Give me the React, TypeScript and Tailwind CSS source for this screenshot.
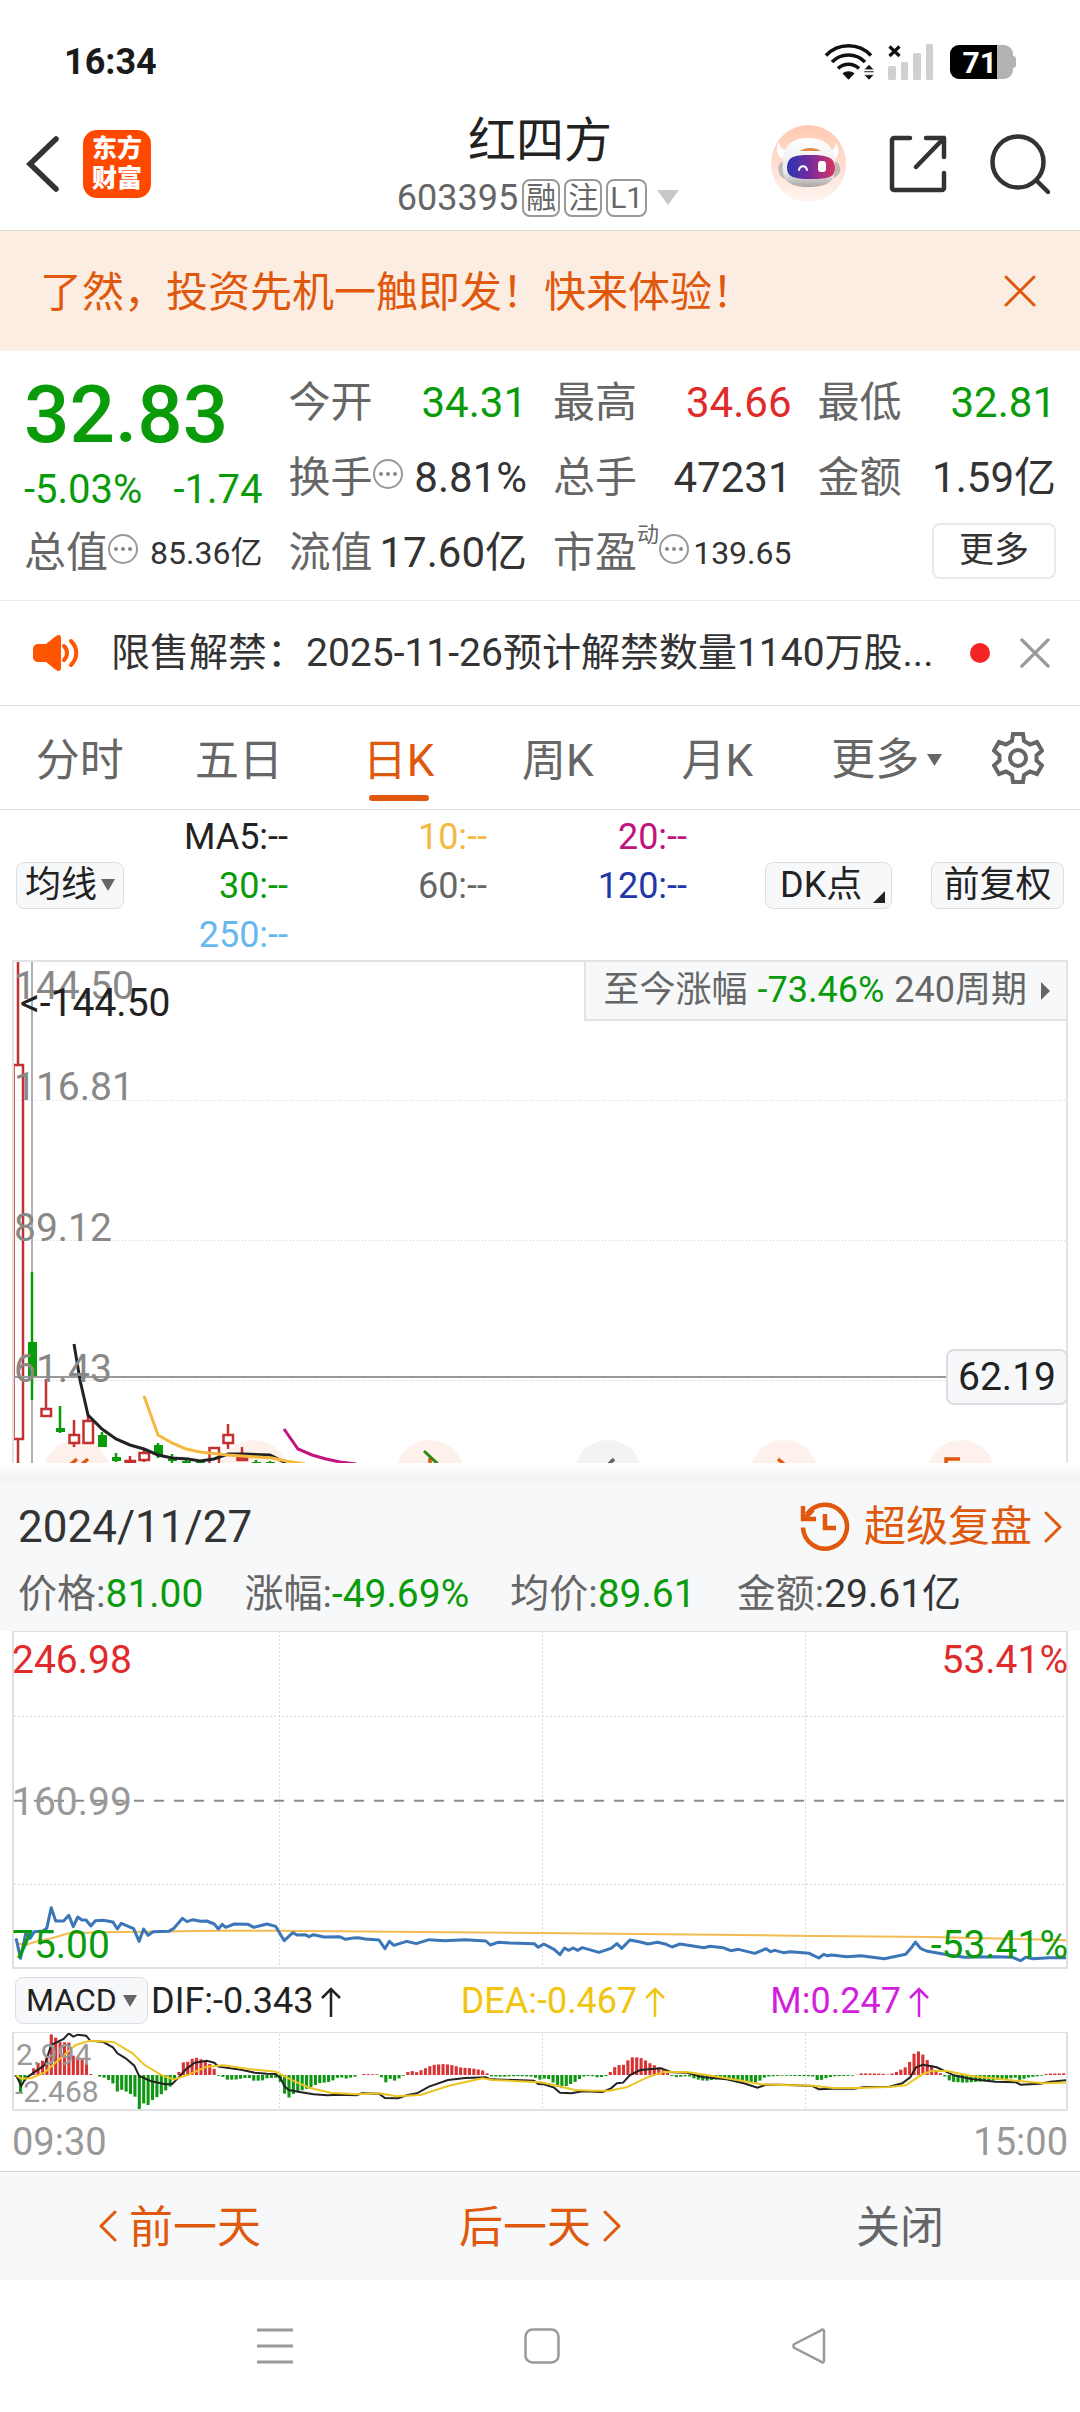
import type { ReactNode } from "react";

type Point = [number, number];

const toPoints = (list: Point[]) => list.map((p) => p.join(",")).join(" ");

/* ---------- chart data (x along the session, y in plot units) ---------- */

const PRICE: Point[] = [
  [47, 295], [60, 355], [75, 280], [88, 295], [100, 275], [125, 273], [136, 265], [149, 203], [162, 243], [185, 243],
  [200, 226], [213, 260], [226, 231], [238, 240], [250, 240], [264, 258], [277, 242], [300, 241], [328, 246], [341, 267],
  [352, 250], [388, 266], [404, 304], [417, 267], [430, 286], [445, 275], [490, 274], [505, 265], [530, 235], [543, 245],
  [560, 239], [582, 244], [600, 243], [622, 252], [634, 267], [645, 253], [655, 262], [680, 252], [720, 253], [737, 262],
  [775, 252], [800, 259], [825, 302], [850, 278], [862, 285], [885, 284], [897, 290], [910, 284], [940, 291], [985, 290],
  [1003, 298], [1025, 294], [1040, 293], [1060, 297], [1100, 300], [1117, 326], [1130, 304], [1143, 316], [1180, 304],
  [1208, 311], [1245, 299], [1290, 302], [1350, 299], [1410, 303], [1423, 315], [1445, 307], [1480, 309], [1550, 311],
  [1562, 322], [1578, 312], [1608, 328], [1625, 344], [1638, 324], [1650, 331], [1663, 324], [1676, 331], [1690, 323],
  [1738, 337], [1773, 325], [1790, 311], [1804, 325], [1828, 300], [1858, 306], [1880, 312], [1908, 307], [1933, 313],
  [1950, 321], [1973, 312], [2043, 323], [2060, 319], [2098, 323], [2120, 332], [2143, 328], [2190, 340], [2223, 326],
  [2236, 335], [2248, 331], [2273, 338], [2293, 335], [2348, 340], [2376, 354], [2390, 343], [2400, 347], [2413, 345],
  [2458, 350], [2498, 347], [2566, 356], [2628, 343], [2643, 325], [2656, 306], [2671, 325], [2688, 333], [2748, 344],
  [2798, 352], [2888, 350], [2938, 352], [2961, 362], [2976, 352], [2998, 356], [3043, 353], [3101, 353],
];

const AVERAGE: Point[] = [
  [47, 310], [75, 315], [110, 303], [150, 295], [200, 280], [300, 277], [520, 274], [640, 272], [800, 272], [1568, 279],
  [2300, 287], [2700, 291], [3101, 301],
];

const DIF: Point[] = [
  [47, 706], [62, 738], [75, 715], [95, 700], [130, 675], [149, 615], [185, 597], [200, 580], [213, 590], [226, 584],
  [250, 587], [262, 602], [300, 606], [328, 622], [341, 640], [365, 655], [390, 677], [404, 708], [440, 724], [480, 733],
  [500, 732], [518, 713], [540, 688], [565, 668], [600, 662], [622, 668], [634, 680], [700, 689], [740, 698], [775, 701],
  [800, 702], [815, 715], [825, 738], [838, 750], [870, 756], [910, 763], [950, 766], [985, 764], [1035, 766], [1050, 760],
  [1100, 761], [1117, 774], [1155, 775], [1180, 766], [1210, 760], [1245, 740], [1300, 720], [1350, 714], [1410, 712],
  [1423, 718], [1550, 722], [1562, 732], [1578, 733], [1608, 743], [1625, 758], [1658, 760], [1690, 754], [1748, 756],
  [1773, 745], [1790, 730], [1808, 728], [1828, 705], [1858, 690], [1918, 685], [1950, 697], [1993, 698], [2038, 711],
  [2108, 718], [2158, 730], [2198, 743], [2223, 734], [2268, 734], [2358, 738], [2376, 748], [2418, 746], [2478, 746],
  [2508, 741], [2578, 741], [2618, 730], [2641, 712], [2658, 682], [2678, 674], [2718, 682], [2768, 706], [2818, 717],
  [2888, 725], [2948, 727], [2961, 734], [3018, 731], [3048, 725], [3101, 720],
];

const DEA: Point[] = [
  [47, 706], [62, 716], [90, 715], [130, 697], [170, 660], [220, 615], [262, 602], [330, 606], [385, 640], [420, 675],
  [470, 706], [505, 718], [550, 703], [600, 680], [650, 676], [720, 687], [800, 695], [850, 722], [900, 744], [960, 758],
  [1035, 763], [1100, 760], [1150, 769], [1220, 765], [1300, 738], [1400, 715], [1430, 720], [1568, 727], [1608, 735],
  [1668, 750], [1718, 752], [1768, 752], [1818, 742], [1878, 712], [1928, 695], [1998, 697], [2068, 708], [2138, 720],
  [2208, 733], [2268, 735], [2358, 737], [2418, 744], [2488, 744], [2578, 741], [2628, 736], [2678, 702], [2708, 692],
  [2748, 693], [2818, 708], [2948, 722], [3028, 730], [3101, 727],
];

const HISTOGRAM: Point[] = [
  [47, -5], [60, -52], [72, -18], [85, -3], [98, 20], [111, 36], [124, 43], [137, 60], [149, 122], [162, 112], [175, 98],
  [200, 98], [213, 58], [226, 55], [239, 50], [252, 33], [264, 3], [277, 0], [290, -5], [303, -8], [316, -15], [330, -27],
  [341, -50], [354, -44], [367, -50], [392, -65], [404, -105], [417, -85], [430, -90], [443, -75], [468, -58], [494, -35],
  [505, -15], [518, 5], [530, 38], [543, 38], [556, 48], [569, 52], [582, 48], [594, 40], [607, 35], [620, 22], [632, -2],
  [645, -4], [658, -14], [683, -14], [710, -9], [725, -9], [735, -17], [760, -17], [775, -10], [800, -8], [813, -20],
  [825, -55], [838, -68], [851, -57], [876, -46], [900, -38], [925, -25], [960, -20], [985, -5], [1003, -11], [1030, -5],
  [1042, 0], [1055, 3], [1095, 2], [1105, -3], [1117, -25], [1130, -10], [1143, -18], [1168, -5], [1180, 8], [1195, 12],
  [1208, 8], [1230, 18], [1255, 30], [1290, 33], [1310, 30], [1340, 22], [1370, 20], [1400, 14], [1410, 8], [1423, -4],
  [1460, -5], [1500, -3], [1550, -5], [1562, -15], [1573, -12], [1588, -9], [1608, -25], [1625, -42], [1650, -30],
  [1676, -17], [1690, -5], [1713, -2], [1738, -8], [1758, -3], [1765, 4], [1778, 15], [1790, 33], [1804, 26], [1818, 38],
  [1828, 53], [1853, 53], [1868, 48], [1880, 38], [1893, 32], [1908, 25], [1928, 12], [1943, 2], [1956, -7], [1998, -3],
  [2018, -12], [2046, -18], [2098, -10], [2128, -18], [2198, -23], [2213, -10], [2223, -5], [2268, -2], [2358, -4],
  [2376, -19], [2390, -11], [2418, -4], [2478, -2], [2498, 5], [2558, 4], [2578, 1], [2603, 10], [2630, 25], [2643, 45],
  [2656, 72], [2669, 70], [2681, 58], [2694, 40], [2707, 25], [2720, 10], [2733, 3], [2746, -8], [2758, -20], [2798, -23],
  [2868, -18], [2948, -8], [2961, -16], [2978, -8], [3023, -2], [3038, 4], [3088, 5], [3101, 9],
];

function valueAt(list: Point[], x: number) {
  for (let i = 1; i < list.length; i++) {
    const [x0, y0] = list[i - 1];
    const [x1, y1] = list[i];
    if (x <= x1) return y0 + ((y1 - y0) * (x - x0)) / (x1 - x0);
  }
  return list[list.length - 1][1];
}

const BARS = Array.from({ length: 240 }, (_, i) => {
  const x = 47 + i * 12.77;
  return { x, v: valueAt(HISTOGRAM, x) };
});

type Candle = { x: number; up: boolean; top: number; bottom: number; high: number; low: number };

const CANDLES: Candle[] = [
  { x: 18, up: true, top: 1065, bottom: 1439, high: 960, low: 1466 },
  { x: 32, up: false, top: 1342, bottom: 1377, high: 1272, low: 1400 },
  { x: 46, up: true, top: 1409, bottom: 1416, high: 1379, low: 1416 },
  { x: 60, up: false, top: 1428, bottom: 1432, high: 1406, low: 1433 },
  { x: 74, up: true, top: 1435, bottom: 1443, high: 1420, low: 1447 },
  { x: 88, up: true, top: 1421, bottom: 1443, high: 1415, low: 1443 },
  { x: 102, up: false, top: 1435, bottom: 1447, high: 1432, low: 1447 },
  { x: 116, up: false, top: 1457, bottom: 1461, high: 1453, low: 1462 },
  { x: 130, up: true, top: 1461, bottom: 1462, high: 1456, low: 1462 },
  { x: 144, up: true, top: 1453, bottom: 1460, high: 1449, low: 1462 },
  { x: 158, up: false, top: 1445, bottom: 1455, high: 1443, low: 1458 },
  { x: 172, up: false, top: 1459, bottom: 1461, high: 1454, low: 1463 },
  { x: 186, up: false, top: 1461, bottom: 1463, high: 1459, low: 1463 },
  { x: 200, up: false, top: 1462, bottom: 1463, high: 1460, low: 1463 },
  { x: 214, up: true, top: 1448, bottom: 1466, high: 1448, low: 1466 },
  { x: 228, up: true, top: 1435, bottom: 1443, high: 1424, low: 1449 },
  { x: 242, up: true, top: 1458, bottom: 1460, high: 1447, low: 1460 },
  { x: 256, up: false, top: 1462, bottom: 1463, high: 1460, low: 1463 },
  { x: 270, up: false, top: 1462, bottom: 1463, high: 1461, low: 1463 },
];

const MA5: Point[] = [
  [74, 1344], [80, 1380], [88, 1415], [102, 1429], [116, 1439], [130, 1445], [144, 1449], [158, 1455], [172, 1458],
  [188, 1459], [200, 1461], [214, 1459], [228, 1454], [244, 1454], [270, 1455], [286, 1463],
];
const MA10: Point[] = [
  [144, 1396], [158, 1435], [172, 1443], [186, 1449], [200, 1452], [228, 1455], [272, 1458], [286, 1461], [305, 1464],
];
const MA20: Point[] = [[284, 1429], [298, 1449], [312, 1455], [326, 1459], [340, 1462], [356, 1464]];

/* ------------------------------- icons ------------------------------- */

function MoreInfo() {
  return (
    <svg viewBox="0 0 30 30" className="mb-2 h-[30px] w-[30px] shrink-0" aria-hidden="true">
      <circle cx="15" cy="15" r="14" fill="none" stroke="#999" strokeWidth="2" />
      <circle cx="8" cy="15" r="2" fill="#888" />
      <circle cx="15" cy="15" r="2" fill="#888" />
      <circle cx="22" cy="15" r="2" fill="#888" />
    </svg>
  );
}

function Triangle({ className }: { className: string }) {
  return (
    <svg viewBox="0 0 14 12" preserveAspectRatio="none" className={className} aria-hidden="true">
      <path d="M0 0h14L7 12z" fill="currentColor" />
    </svg>
  );
}

function Cross({ className, width }: { className: string; width: number }) {
  return (
    <svg viewBox="0 0 32 32" className={className} fill="none" stroke="currentColor" strokeWidth={width} strokeLinecap="round" aria-hidden="true">
      <path d="M2 2l28 28M30 2L2 30" />
    </svg>
  );
}

function Chevron({ left = false }: { left?: boolean }) {
  return (
    <svg viewBox="0 0 18 32" className="h-8 w-[18px]" fill="none" stroke="currentColor" strokeWidth="3" strokeLinecap="round" strokeLinejoin="round" aria-hidden="true">
      <path d={left ? "M16 2L2 16l14 14" : "M2 2l14 14L2 30"} />
    </svg>
  );
}

function ArrowUp() {
  return (
    <svg viewBox="0 0 20 30" className="ml-2 h-[30px] w-5" fill="none" stroke="currentColor" strokeWidth="2.5" aria-hidden="true">
      <path d="M10 30V2M1 11l9-9 9 9" />
    </svg>
  );
}

function Robot() {
  return (
    <svg viewBox="0 0 75 77" className="h-[77px] w-[75px]" aria-hidden="true">
      <defs>
        <linearGradient id="halo" x1="0" y1="0" x2="0" y2="1">
          <stop offset="0" stopColor="#ffc9b0" />
          <stop offset="0.6" stopColor="#ffe2d5" />
          <stop offset="1" stopColor="#fff6f1" />
        </linearGradient>
        <linearGradient id="visor" x1="0" y1="0" x2="1" y2="0">
          <stop offset="0" stopColor="#2b35b4" />
          <stop offset="0.5" stopColor="#7a2a9a" />
          <stop offset="1" stopColor="#d8365c" />
        </linearGradient>
        <linearGradient id="shell" x1="0" y1="0" x2="0" y2="1">
          <stop offset="0" stopColor="#ffffff" />
          <stop offset="0.7" stopColor="#ebe9e9" />
          <stop offset="1" stopColor="#aaa6a6" />
        </linearGradient>
      </defs>
      <ellipse cx="37.5" cy="38.5" rx="37.5" ry="38.5" fill="url(#halo)" />
      <path d="M8 17c1 6 4 8 9 9l-6 8c-5-4-7-11-3-17zM65 18c0 5-3 7-7 8l6 8c4-4 5-10 1-16z" fill="#fff" />
      <path d="M9 38c-3 5-2 13 5 16V36zM67 38c4 5 3 11-4 15V36z" fill="#bdb9b9" />
      <path d="M12 36c0-16 10-23 25-23s26 7 27 23c1 17-2 26-27 26-22 0-27-9-25-26z" fill="url(#shell)" />
      <path d="M29 26c5-4 15-4 21 0z" fill="#e08a4c" />
      <path d="M16 42c1-10 6-12 23-12s24 2 25 12c0 10-5 12-24 12-18 0-24-2-24-12z" fill="url(#visor)" />
      <path d="M28 45c1-5 7-5 8 0" fill="none" stroke="#fff" strokeWidth="2" strokeLinecap="round" />
      <rect x="47" y="36" width="8" height="11" rx="3" fill="#fff" />
    </svg>
  );
}

function StatusIcons() {
  return (
    <div className="flex items-center">
      <svg viewBox="0 0 50 36" className="mr-3.5 h-9 w-[50px]" fill="none" stroke="#111" aria-label="Wi-Fi">
        <path d="M2 11.500a31 31 0 0 1 45 0M8 18a23 23 0 0 1 33 0M14 24.500a15 15 0 0 1 21 0" strokeWidth="3.600" />
        <path d="M18.500 29.500c3-3 9-3 12 0l-6 6.200z" fill="#111" stroke="none" />
        <path d="M45 20.500l5 5.200H40zM45 36l5-5.200H40zM40 27h10v1.500H40z" fill="#111" stroke="#fff" strokeWidth="0.600" />
      </svg>
      <svg viewBox="0 0 46 36" className="mr-4 h-9 w-[46px]" aria-label="No signal">
        <path d="M1.500 2.500l10 9.500M11.500 2.500L1.500 12" stroke="#111" strokeWidth="3.200" />
        <g fill="#d0d0d0">
          <rect x="0" y="22" width="8" height="14" rx="1.500" />
          <rect x="13" y="18" width="7" height="18" rx="1.500" />
          <rect x="25" y="9" width="8" height="27" rx="1.500" />
          <rect x="38" y="0" width="7" height="36" rx="1.500" />
        </g>
      </svg>
      <div className="flex items-center">
        <div className="flex h-[34px] w-[63px] overflow-hidden rounded-[9px] bg-[#b3b3b3]">
          <span className="w-[47px] bg-black text-right text-[30px] leading-[35px] font-bold text-white">71</span>
        </div>
        <span className="h-3 w-[3px] rounded-r bg-[#b3b3b3]" />
      </div>
    </div>
  );
}

/* ------------------------------ sections ------------------------------ */

function Tag({ children }: { children: ReactNode }) {
  return (
    <span className="flex h-[38px] items-center rounded-lg border-2 border-[#999] px-0.5 text-[30px] leading-8">
      {children}
    </span>
  );
}

function Header() {
  return (
    <header className="grid h-[134px] grid-cols-[1fr_auto_1fr] items-center border-b border-[#d8d8d4]">
      <div className="flex items-center gap-6 pl-[26px]">
        <button type="button" aria-label="返回">
          <svg viewBox="0 0 33 56" className="h-14 w-[33px]" fill="none" stroke="#333" strokeWidth="5.500" strokeLinecap="round" aria-hidden="true">
            <path d="M30 3L4 28l26 25" />
          </svg>
        </button>
        <div className="grid h-[68px] w-[68px] place-content-center rounded-[14px] bg-[#ff4800] text-center text-[25px] leading-[30px] font-black text-white">
          <span>东方</span>
          <span>财富</span>
        </div>
      </div>
      <div className="flex flex-col items-center gap-2.5 pt-0.5">
        <h1 className="text-[48px] leading-[56px] text-[#222]">红四方</h1>
        <button type="button" className="flex items-center gap-1 pr-1 text-[#666]">
          <span className="text-[36px] leading-[38px]">603395</span>
          <Tag>融</Tag>
          <Tag>注</Tag>
          <Tag>L1</Tag>
          <Triangle className="ml-1.5 h-[15px] w-[22px] text-[#c8c8c8]" />
        </button>
      </div>
      <div className="flex items-center justify-end gap-[43px] pr-[30px]">
        <button type="button" aria-label="智能助手">
          <Robot />
        </button>
        <button type="button" aria-label="分享">
          <svg viewBox="0 0 58 58" className="h-[58px] w-[58px]" fill="none" stroke="#333" strokeWidth="4.500" strokeLinecap="round" strokeLinejoin="round" aria-hidden="true">
            <path d="M21 3H5a2 2 0 0 0-2 2v48a2 2 0 0 0 2 2h48a2 2 0 0 0 2-2V38M37 3h18v19M55 3L27 32" />
          </svg>
        </button>
        <button type="button" aria-label="搜索">
          <svg viewBox="0 0 60 60" className="h-[60px] w-[60px]" fill="none" stroke="#333" strokeWidth="4.500" strokeLinecap="round" aria-hidden="true">
            <circle cx="28" cy="28" r="25.500" />
            <path d="M47 47l11 11" />
          </svg>
        </button>
      </div>
    </header>
  );
}

function Stat({ label, value, tone = "text-[#333]", info = false, small = false, sup }: {
  label: string;
  value: string;
  tone?: string;
  info?: boolean;
  small?: boolean;
  sup?: string;
}) {
  return (
    <div className="flex h-[75px] items-center justify-between whitespace-nowrap">
      <span className="flex items-center text-[42px] leading-[50px] text-[#666]">
        {label}
        {sup && <sup className="top-0 mb-9 text-[22px] leading-6">{sup}</sup>}
        {info && <MoreInfo />}
      </span>
      <span className={small ? `text-[32px] leading-[50px] ${tone}` : `text-[42px] leading-[50px] ${tone}`}>{value}</span>
    </div>
  );
}

function Quote() {
  return (
    <section className="grid grid-cols-4 gap-x-[26px] border-b border-[#ebebeb] px-6 pt-3.5 pb-2.5">
      <div className="row-span-2 pt-1.5 text-[#0a9b0a]">
        <p className="text-[80px] leading-[88px] font-medium">32.83</p>
        <p className="mt-1.5 flex justify-between text-[40px] leading-[50px]">
          <span>-5.03%</span>
          <span>-1.74</span>
        </p>
      </div>
      <Stat label="今开" value="34.31" tone="text-[#0a9b0a]" />
      <Stat label="最高" value="34.66" tone="text-[#e02b2b]" />
      <Stat label="最低" value="32.81" tone="text-[#0a9b0a]" />
      <Stat label="换手" value="8.81%" info />
      <Stat label="总手" value="47231" />
      <Stat label="金额" value="1.59亿" />
      <Stat label="总值" value="85.36亿" info small />
      <Stat label="流值" value="17.60亿" />
      <Stat label="市盈" value="139.65" sup="动" info small />
      <div className="flex h-[71px] items-center justify-end">
        <button type="button" className="h-14 w-[124px] rounded-lg border-2 border-[#e8eaec] text-[35px] leading-[50px] text-[#333]">
          更多
        </button>
      </div>
    </section>
  );
}

function Notice() {
  return (
    <section className="flex h-[105px] items-center border-b border-[#d9d9d9] pr-[30px] pl-[33px]">
      <svg viewBox="0 0 46 38" className="mr-8 h-[38px] w-[46px] shrink-0" aria-hidden="true">
        <path d="M6 10h7L23 2c3-2 5-1 5 2v30c0 3-2 4-5 2l-10-8H6c-4 0-6-2-6-5v-8c0-3 2-5 6-5z" fill="#ff5500" />
        <path d="M31 12c4 4 4 10 0 14M38 7c7 7 7 17 0 24" fill="none" stroke="#ff5500" strokeWidth="4" strokeLinecap="round" />
      </svg>
      <p className="flex-1 text-[39px] leading-[50px] whitespace-nowrap text-[#333]">限售解禁：2025-11-26预计解禁数量1140万股...</p>
      <span className="mr-[30px] h-5 w-5 rounded-full bg-[#f52424]" />
      <button type="button" aria-label="关闭公告" className="text-[#999]">
        <Cross className="h-[30px] w-[30px]" width={3.5} />
      </button>
    </section>
  );
}

function Tabs() {
  return (
    <nav className="grid h-[104px] grid-cols-[160fr_160fr_160fr_160fr_160fr_180fr_104fr] border-b border-[#d9d9d9] text-[44px] leading-[50px] text-[#666]">
      {["分时", "五日", "日K", "周K", "月K"].map((name) =>
        name === "日K" ? (
          <button key={name} type="button" aria-current="page" className="flex flex-col items-center pt-[30px] text-[#e0580c]">
            {name}
            <span className="mt-[9px] h-1.5 w-[60px] rounded-full bg-[#e0580c]" />
          </button>
        ) : (
          <button key={name} type="button" className="flex justify-center pt-[30px]">
            {name}
          </button>
        ),
      )}
      <button type="button" className="flex items-center justify-center gap-2 pt-1">
        更多
        <Triangle className="h-3 w-[15px]" />
      </button>
      <button type="button" aria-label="设置" className="flex items-center justify-center pr-5">
        <svg viewBox="0 0 52 52" className="h-[52px] w-[52px]" fill="none" stroke="#666" strokeWidth="4" aria-hidden="true">
          <path d="M21 2h10l1 7 6 3.500 7-2.500 5 8.500-5.500 5v5l5.500 5-5 8.500-7-2.500-6 3.500-1 7H21l-1-7-6-3.500-7 2.500-5-8.500 5.500-5v-5L2 18.500 7 10l7 2.500L20 9z" strokeLinejoin="miter" />
          <circle cx="26" cy="26" r="8" />
        </svg>
      </button>
    </nav>
  );
}

const chip = "flex h-[47px] items-center rounded-lg border border-[#dcdfe3] bg-[#f7f8fa] text-[36px] leading-[45px] text-[#222]";

function Averages() {
  return (
    <section className="flex h-[150px] items-center">
      <button type="button" className={`${chip} ml-4 w-[108px] justify-center gap-1`}>
        均线
        <Triangle className="h-3 w-3.5 shrink-0 text-[#666]" />
      </button>
      <div className="mr-auto grid grid-cols-[164px_199px_200px] pt-0.5 text-right text-[36px] leading-[49px]">
        <span className="text-[#222]">MA5:--</span>
        <span className="text-[#f5b93f]">10:--</span>
        <span className="text-[#c2147d]">20:--</span>
        <span className="text-[#0a9b0a]">30:--</span>
        <span className="text-[#666]">60:--</span>
        <span className="text-[#2136a8]">120:--</span>
        <span className="text-[#68b8f0]">250:--</span>
      </div>
      <button type="button" className={`${chip} mr-[39px] w-[127px] justify-between pr-1.5 pl-3.5`}>
        DK点
        <svg viewBox="0 0 12 12" className="mt-6 h-3 w-3" aria-hidden="true">
          <path d="M12 0v12H0z" fill="#222" />
        </svg>
      </button>
      <button type="button" className={`${chip} mr-4 w-[133px] justify-center`}>
        前复权
      </button>
    </section>
  );
}

const axis = "absolute left-0 text-[39px] leading-10 text-[#888]";

function DailyChart() {
  return (
    <section className="relative mx-3 h-[503px] border-x-2 border-t-2 border-[#e3e3e3]">
      <svg viewBox="14 962 1052 501" preserveAspectRatio="none" className="h-full w-full" aria-label="日K线图">
        {[77, 254, 430, 608, 784, 961].map((x) => (
          <circle key={x} cx={x} cy="1474" r="34" fill={x === 608 ? "#f3f3f3" : "#fef0ea"} />
        ))}
        <g stroke="#e0580c" strokeWidth="3.500" fill="none">
          <path d="M70 1465l7-6M81 1465l7-6M778 1459l7 6M946 1466v-7h14M430 1458v8" />
        </g>
        <path d="M608 1465l6-6" stroke="#666" strokeWidth="3.500" />
        <path d="M424 1451l15 14" stroke="#2a8a12" strokeWidth="3" />
        <g stroke="#d6d6d6" strokeDasharray="1 2">
          <path d="M14 1100.500H1066M14 1240.500H1066M14 1380.500H1066" />
        </g>
        <path d="M32 962V1463" stroke="#b0b0b0" strokeWidth="2" />
        {CANDLES.map((c) =>
          c.up ? (
            <g key={c.x} stroke="#c43030" strokeWidth="2.500" fill="none">
              <path d={`M${c.x} ${c.high}V${c.top}M${c.x} ${c.bottom}V${c.low}`} />
              <rect x={c.x - 4.5} y={c.top} width="9.500" height={c.bottom - c.top} />
            </g>
          ) : (
            <g key={c.x} fill="#0a9b0a">
              <rect x={c.x - 1.25} y={c.high} width="2.500" height={c.low - c.high} />
              <rect x={c.x - 4} y={c.top} width="9" height={c.bottom - c.top} />
            </g>
          ),
        )}
        <path d="M14 1377H1066" stroke="#999" strokeWidth="2" />
        <g fill="none" strokeWidth="3">
          <polyline points={toPoints(MA5)} stroke="#222" />
          <polyline points={toPoints(MA10)} stroke="#f5b93f" />
          <polyline points={toPoints(MA20)} stroke="#c2147d" />
        </g>
      </svg>
      <span className={`${axis} top-1`}>144.50</span>
      <span className={`${axis} top-[105px]`}>116.81</span>
      <span className={`${axis} top-[246px]`}>89.12</span>
      <span className={`${axis} top-[387px]`}>61.43</span>
      <span className="absolute top-[21px] left-1.5 text-[39px] leading-10 text-[#222]">&lt;-144.50</span>
      <button type="button" className="absolute -top-0.5 -right-0.5 flex h-[61px] items-center border-2 border-[#e3e3e3] bg-[#f7f8fa] pr-4 pl-[18px] text-[36px] leading-[45px] text-[#666]">
        至今涨幅
        <span className="mx-2.5 text-[#0a9b0a]">-73.46%</span>
        240周期
        <svg viewBox="0 0 9 18" className="ml-3.5 h-[18px] w-[9px]" aria-hidden="true">
          <path d="M0 0l9 9-9 9z" fill="#666" />
        </svg>
      </button>
      <span className="absolute top-[387px] -right-0.5 flex h-14 w-[122px] items-center justify-center rounded-lg border-2 border-[#d9dde2] bg-[#f7f8fa] text-[39px] leading-[45px] text-[#222]">
        62.19
      </span>
    </section>
  );
}

function DayItem({ label, value, tone }: { label: string; value: string; tone: string }) {
  return (
    <span className="text-[#666]">
      {label}:<span className={tone}>{value}</span>
    </span>
  );
}

function DaySummary() {
  return (
    <section className="h-[150px] bg-[#f7f8fa] px-[18px] pt-4">
      <div className="flex items-center justify-between">
        <h2 className="text-[44px] leading-[60px] text-[#333]">2024/11/27</h2>
        <a href="#replay" className="flex items-center text-[42px] leading-[60px] text-[#e0580c]">
          <svg viewBox="0 0 50 50" className="mr-3.5 h-[50px] w-[50px]" fill="none" stroke="currentColor" strokeWidth="4.500" aria-hidden="true">
            <path d="M3 25.500a22 22 0 1 0 4-13.500M3 4v13h13M6 15l7-7" />
            <path d="M25 12v14h11" />
          </svg>
          超级复盘
          <span className="ml-3">
            <Chevron />
          </span>
        </a>
      </div>
      <div className="mt-3 flex gap-[41px] text-[39px] leading-[50px] whitespace-nowrap">
        <DayItem label="价格" value="81.00" tone="text-[#0a9b0a]" />
        <DayItem label="涨幅" value="-49.69%" tone="text-[#0a9b0a]" />
        <DayItem label="均价" value="89.61" tone="text-[#0a9b0a]" />
        <DayItem label="金额" value="29.61亿" tone="text-[#333]" />
      </div>
    </section>
  );
}

const plotLabel = "absolute text-[39px] leading-10";

function IntradayChart() {
  return (
    <section className="relative mx-3 h-[338px] border-2 border-t border-[#e0e0e0]">
      <svg viewBox="41 -624 3052 1005" preserveAspectRatio="none" className="h-full w-full" fill="none" aria-label="分时图">
        <g stroke="#d6d6d6" strokeDasharray="2 2">
          <path vectorEffect="non-scaling-stroke" d="M41 -371H3093M41 133H3093M811 -627V387M1574 -627V387M2337 -627V387" />
        </g>
        <path vectorEffect="non-scaling-stroke" d="M41 -118H3093" stroke="#8c8c8c" strokeWidth="2" strokeDasharray="10 10" />
        <polyline vectorEffect="non-scaling-stroke" points={toPoints(AVERAGE)} stroke="#f3bb52" strokeWidth="2" />
        <polyline vectorEffect="non-scaling-stroke" points={toPoints(PRICE)} stroke="#3a76b8" strokeWidth="3" strokeLinejoin="round" />
      </svg>
      <span className={`${plotLabel} top-2 -left-0.5 text-[#e02b2b]`}>246.98</span>
      <span className={`${plotLabel} top-2 -right-0.5 text-[#e02b2b]`}>53.41%</span>
      <span className={`${plotLabel} top-[150px] -left-0.5 text-[#999]`}>160.99</span>
      <span className={`${plotLabel} top-[293px] -left-0.5 text-[#0a9b0a]`}>75.00</span>
      <span className={`${plotLabel} top-[293px] -right-0.5 text-[#0a9b0a]`}>-53.41%</span>
    </section>
  );
}

function MacdLegend() {
  return (
    <section className="flex h-[63px] items-center">
      <button type="button" className={`${chip} ml-[15px] w-[133px] shrink-0 justify-between px-2.5`}>
        <span className="text-[32px]">MACD</span>
        <Triangle className="h-3 w-3.5 text-[#666]" />
      </button>
      <div className="grid flex-1 grid-cols-3 pt-0.5 pl-[3px] text-[36px] leading-[45px]">
        <span className="flex items-center text-[#222]">DIF:-0.343<ArrowUp /></span>
        <span className="flex items-center text-[#f2c40f]">DEA:-0.467<ArrowUp /></span>
        <span className="flex items-center text-[#d21fdb]">M:0.247<ArrowUp /></span>
      </div>
    </section>
  );
}

function MacdChart() {
  return (
    <section className="relative mx-3 h-[79px] border-2 border-t border-[#e0e0e0]">
      <svg viewBox="41 579 3052 228" preserveAspectRatio="none" className="h-full w-full" fill="none" aria-label="MACD">
        <path vectorEffect="non-scaling-stroke" d="M811 570V810M1574 570V810M2337 570V810" stroke="#d6d6d6" strokeDasharray="2 2" />
        {BARS.map((b) => (
          <rect
            key={b.x}
            x={b.x - 4.5}
            y={b.v > 0 ? 705 - b.v : 705}
            width="9"
            height={Math.abs(b.v)}
            fill={b.v > 0 ? "#d83232" : "#0f9612"}
          />
        ))}
        <polyline vectorEffect="non-scaling-stroke" points={toPoints(DIF)} stroke="#222" strokeWidth="2" />
        <polyline vectorEffect="non-scaling-stroke" points={toPoints(DEA)} stroke="#ecc422" strokeWidth="2" />
      </svg>
      <span className="absolute top-1 left-0.5 text-[30px] leading-9 text-[#999]">2.994</span>
      <span className="absolute top-[41px] left-px text-[30px] leading-9 text-[#999]">-2.468</span>
    </section>
  );
}

export default function App() {
  return (
    <main className="w-full overflow-hidden bg-white font-[Roboto,'Noto_Sans_CJK_SC',sans-serif]" lang="zh-CN">
      <div className="flex h-[97px] items-center justify-between px-16 pt-[27px]">
        <time className="text-[36px] leading-[44px] font-bold text-[#1a1a1a]">16:34</time>
        <StatusIcons />
      </div>
      <Header />
      <section className="flex h-[120px] items-center justify-between bg-[#fcede3] pr-[44px] pl-10 text-[#e0580c]">
        <a href="#promo" className="pt-1 text-[42px] leading-[50px] whitespace-nowrap">了然，投资先机一触即发！快来体验！</a>
        <button type="button" aria-label="关闭横幅">
          <Cross className="h-8 w-8" width={3} />
        </button>
      </section>
      <Quote />
      <Notice />
      <Tabs />
      <Averages />
      <DailyChart />
      <div className="h-[18px] bg-linear-to-b from-white to-[#f2f2f2]" />
      <DaySummary />
      <IntradayChart />
      <MacdLegend />
      <MacdChart />
      <div className="flex h-[60px] items-center justify-between px-3 pt-0.5 text-[38px] leading-[45px] text-[#999]">
        <span>09:30</span>
        <span>15:00</span>
      </div>
      <footer className="grid h-[109px] grid-cols-3 border-t border-[#d6d6d6] bg-[#f7f8fa] text-[44px] leading-[50px]">
        <button type="button" className="flex items-center justify-center gap-3 text-[#e0580c]">
          <Chevron left />
          <span className="pt-1">前一天</span>
        </button>
        <button type="button" className="flex items-center justify-center gap-3 text-[#e0580c]">
          <span className="pt-1">后一天</span>
          <Chevron />
        </button>
        <button type="button" className="flex items-center justify-center text-[#666]">
          <span className="pt-1">关闭</span>
        </button>
      </footer>
      <nav className="grid h-[132px] grid-cols-3 place-items-center pr-[138px] pl-[142px]">
        <button type="button" aria-label="最近任务">
          <svg viewBox="0 0 36 36" className="h-9 w-9" stroke="#999" strokeWidth="3" aria-hidden="true">
            <path d="M0 2h36M0 18h36M0 34h36" />
          </svg>
        </button>
        <button type="button" aria-label="主页">
          <svg viewBox="0 0 36 36" className="h-9 w-9" fill="none" stroke="#999" strokeWidth="2.500" aria-hidden="true">
            <rect x="1.500" y="1.500" width="33" height="33" rx="7" />
          </svg>
        </button>
        <button type="button" aria-label="后退">
          <svg viewBox="0 0 36 36" className="h-9 w-9" fill="none" stroke="#999" strokeWidth="2.500" strokeLinejoin="round" aria-hidden="true">
            <path d="M33 3.500v29c0 2-1.500 2.500-3 1.200L3.500 20c-1.500-1-1.500-3 0-4L30 2.300c1.500-1.300 3-.8 3 1.200z" />
          </svg>
        </button>
      </nav>
    </main>
  );
}
